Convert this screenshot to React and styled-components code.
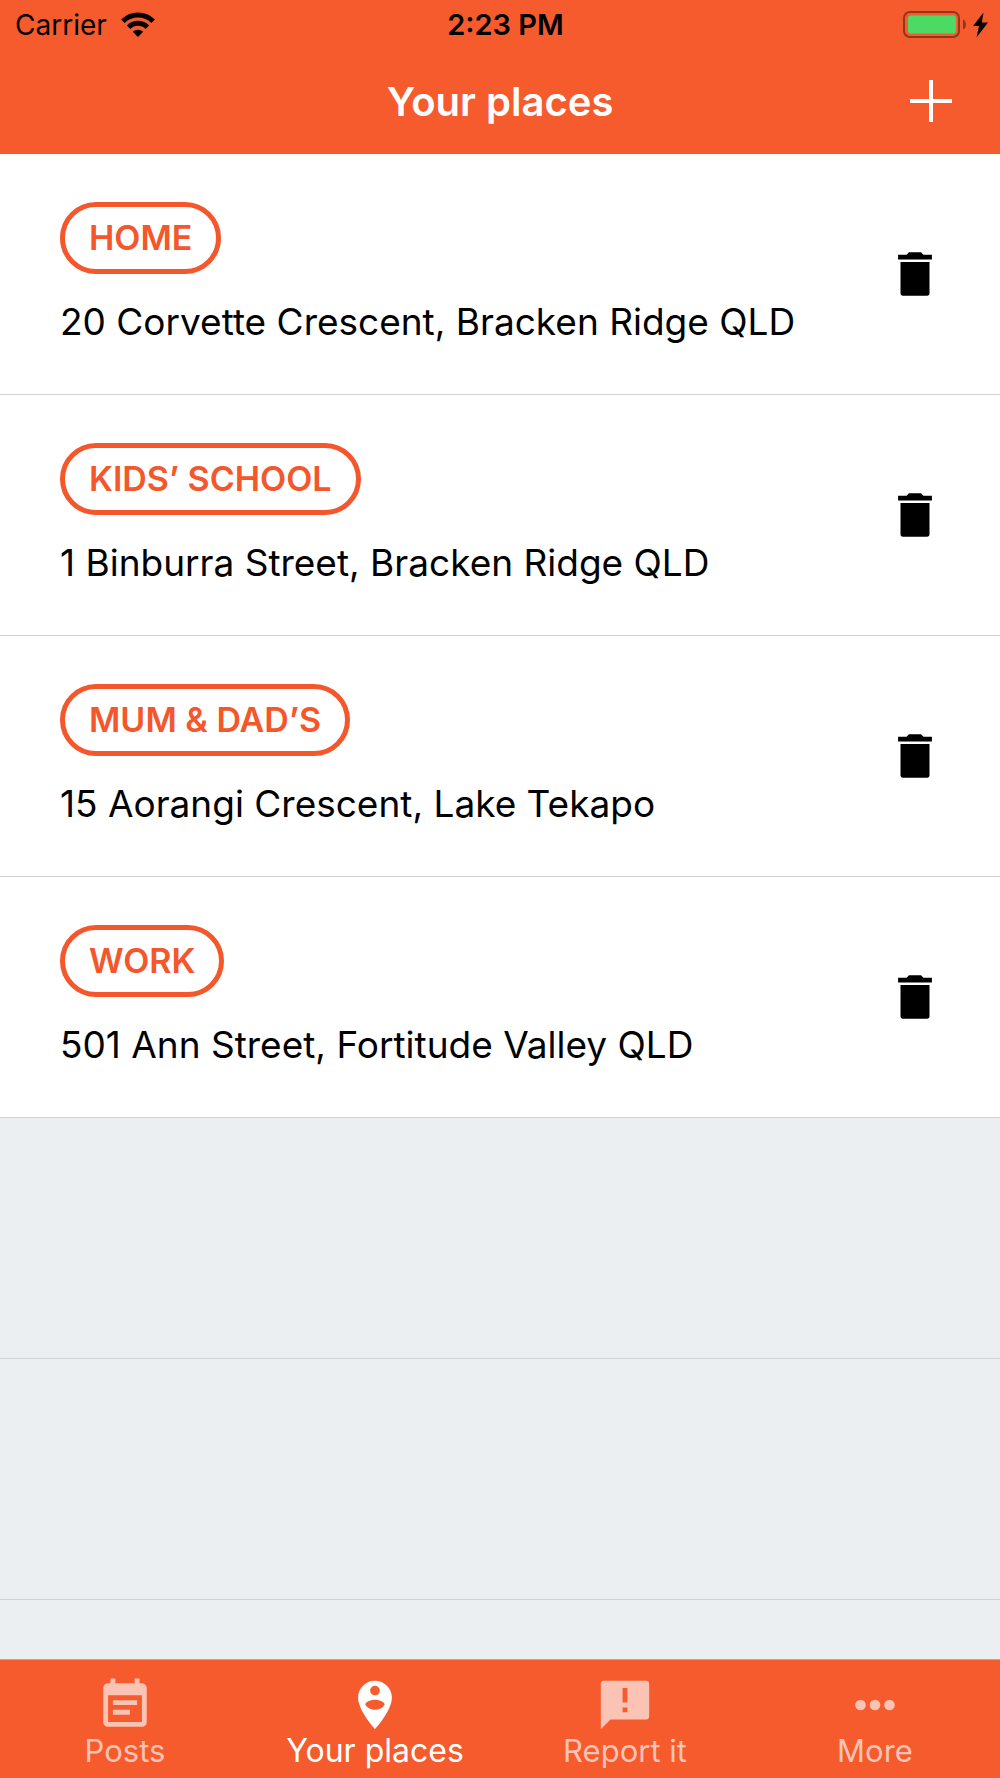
import styled, { createGlobalStyle } from "styled-components";

const GlobalStyle = createGlobalStyle`
    * {
        box-sizing: border-box;
    }
    body {
        margin: 0;
        background: #ebeff2;
        font-family: Inter, "Liberation Sans", sans-serif;
        color: #000;
    }
`

const Screen = styled.div`
    display: flex;
    flex-direction: column;
    min-height: 100vh;
`

const Header = styled.header`
    display: flex;
    flex-direction: column;
    background: #f65b2e;
`

const StatusBar = styled.div`
    display: grid;
    grid-template-columns: 1fr auto 1fr;
    align-items: center;
    height: 50px;
    padding: 0 12px 0 15px;
    font-size: 28px;
    line-height: 32px;
`

const Carrier = styled.div`
    display: flex;
    align-items: center;
    gap: 14px;
`

const Time = styled.time`
    padding-left: 8px;
    font-size: 29px;
    font-weight: 600;
`

const Power = styled.div`
    display: flex;
    align-items: center;
    justify-content: flex-end;
`

const NavBar = styled.div`
    display: grid;
    grid-template-columns: 1fr auto 1fr;
    align-items: center;
    height: 104px;
    padding: 0 38px;
`

const Title = styled.h1`
    grid-column: 2;
    margin: 0;
    font-size: 40px;
    line-height: 48px;
    font-weight: 600;
    color: #fff;
`

const IconButton = styled.button`
    display: flex;
    justify-self: end;
    padding: 0;
    border: 0;
    background: none;
    color: ${props => props.$color};
    cursor: pointer;
`

const List = styled.ul`
    flex: 1 0 0;
    min-height: 0;
    margin: 0;
    padding: 0;
    list-style: none;
`

const Row = styled.li`
    display: flex;
    align-items: center;
    justify-content: space-between;
    height: 241px;
    padding: 0 56px 0 60px;
    border-bottom: 1px solid #d0d3d6;
    background: ${props => props.$empty ? "transparent" : "#fff"};
`

const Place = styled.div`
    display: flex;
    flex-direction: column;
    align-items: flex-start;
    gap: 24px;
`

const Badge = styled.span`
    padding: 11px 24px;
    border: 5px solid #f3572b;
    border-radius: 36px;
    font-size: 34px;
    line-height: 40px;
    font-weight: 600;
    text-transform: uppercase;
    color: #f3572b;
`

const Address = styled.span`
    font-size: 37px;
    line-height: 48px;
`

const TabBar = styled.nav`
    display: grid;
    grid-template-columns: repeat(4, 1fr);
    height: 119px;
    border-top: 1px solid #a9b0b3;
    background: #f65b2e;
`

const Tab = styled.a`
    display: flex;
    flex-direction: column;
    align-items: center;
    padding-top: 16px;
    font-size: ${props => props.$active ? "32px" : "31px"};
    line-height: 34px;
    text-decoration: none;
    color: ${props => props.$active ? "#fff" : "#fbc3b3"};
`

const places = [
    { name: "Home", address: "20 Corvette Crescent, Bracken Ridge QLD" },
    { name: "Kids’ School", address: "1 Binburra Street, Bracken Ridge QLD" },
    { name: "Mum & Dad’s", address: "15 Aorangi Crescent, Lake Tekapo" },
    { name: "Work", address: "501 Ann Street, Fortitude Valley QLD" },
]

const tabs = [
    {
        label: "Posts",
        path: "M19 3h-1V1h-2v2H8V1H6v2H5c-1.1 0-2 .9-2 2v14c0 1.1.9 2 2 2h14c1.1 0 2-.9 2-2V5c0-1.1-.9-2-2-2zm0 16H5V8h14v11zM17 10H7v2h10v-2zm-3 4H7v2h7v-2z",
    },
    {
        label: "Your places",
        active: true,
        path: "M12 2C8.14 2 5 5.14 5 9c0 5.25 7 13 7 13s7-7.75 7-13c0-3.86-3.14-7-7-7zm0 2c1.1 0 2 .9 2 2 0 1.11-.9 2-2 2s-2-.89-2-2c0-1.1.9-2 2-2zm0 10c-1.67 0-3.14-.85-4-2.15.02-1.32 2.67-2.05 4-2.05s3.98.73 4 2.05c-.86 1.3-2.33 2.15-4 2.15z",
    },
    {
        label: "Report it",
        path: "M20.8 2H3.2C2.5 2 2 2.5 2 3.2V22l4-4h14.8c.7 0 1.2-.5 1.2-1.2V3.2c0-.7-.5-1.2-1.2-1.2zM13 11h-2V5h2v6zm0 4h-2v-2h2v2z",
    },
    {
        label: "More",
        path: "M6 9.8a2.2 2.2 0 1 0 0 4.4a2.2 2.2 0 1 0 0-4.4zM12 9.8a2.2 2.2 0 1 0 0 4.4a2.2 2.2 0 1 0 0-4.4zM18 9.8a2.2 2.2 0 1 0 0 4.4a2.2 2.2 0 1 0 0-4.4z",
    },
]

const Glyph = ({ path }) => (
    <svg width="58" height="58" viewBox="0 0 24 24" fill="currentColor" fillRule="evenodd" aria-hidden="true">
        <path d={path} />
    </svg>
)

const WifiIcon = () => (
    <svg width="34" height="26" viewBox="0 0 34 26" aria-hidden="true">
        <g fill="none" stroke="#000" strokeWidth="5">
            <path d="M1.9 9.3a21.4 21.4 0 0 1 30.2 0" />
            <path d="M7.6 15.2a13.3 13.3 0 0 1 18.8 0" />
        </g>
        <path d="M17 25l-5.2-5.2a7.4 7.4 0 0 1 10.4 0z" />
    </svg>
)

const BatteryIcon = () => (
    <svg width="85" height="30" viewBox="0 0 85 30" role="img" aria-label="Battery charging">
        <rect x="1" y="2" width="55" height="25" rx="6" fill="none" stroke="#90371d" strokeWidth="2" />
        <rect x="5" y="5.5" width="48" height="18" rx="3" fill="#4cd964" />
        <path d="M60 9.5c4 1.5 4 8.5 0 10z" fill="#90371d" />
        <path d="M80.5 2.5L70 16h6L73.5 27.5L85 12.500h-6.200z" />
    </svg>
)

const PlusIcon = () => (
    <svg width="62" height="62" viewBox="0 0 62 62" aria-hidden="true">
        <path d="M10 30h42M31 9v42" stroke="currentColor" strokeWidth="4" />
    </svg>
)

const trash = "M7 21h10c.6 0 1-.4 1-1V7H6v13c0 .6.4 1 1 1zM19 4h-3.500l-1-1h-5l-1 1H5v2h14V4z"

export default function App() {
    return (
        <Screen>
            <GlobalStyle />
            <Header>
                <StatusBar>
                    <Carrier>Carrier <WifiIcon /></Carrier>
                    <Time dateTime="14:23">2:23 PM</Time>
                    <Power><BatteryIcon /></Power>
                </StatusBar>
                <NavBar>
                    <Title>Your places</Title>
                    <IconButton type="button" aria-label="Add place" $color="#fff"><PlusIcon /></IconButton>
                </NavBar>
            </Header>
            <List>
                {places.map(place => (
                    <Row key={place.name}>
                        <Place>
                            <Badge>{place.name}</Badge>
                            <Address>{place.address}</Address>
                        </Place>
                        <IconButton type="button" aria-label={"Delete " + place.name} $color="#000">
                            <Glyph path={trash} />
                        </IconButton>
                    </Row>
                ))}
                <Row $empty aria-hidden="true" />
                <Row $empty aria-hidden="true" />
            </List>
            <TabBar>
                {tabs.map(tab => (
                    <Tab key={tab.label} href="#" $active={tab.active} aria-current={tab.active ? "page" : undefined}>
                        <Glyph path={tab.path} />
                        {tab.label}
                    </Tab>
                ))}
            </TabBar>
        </Screen>
    )
}
